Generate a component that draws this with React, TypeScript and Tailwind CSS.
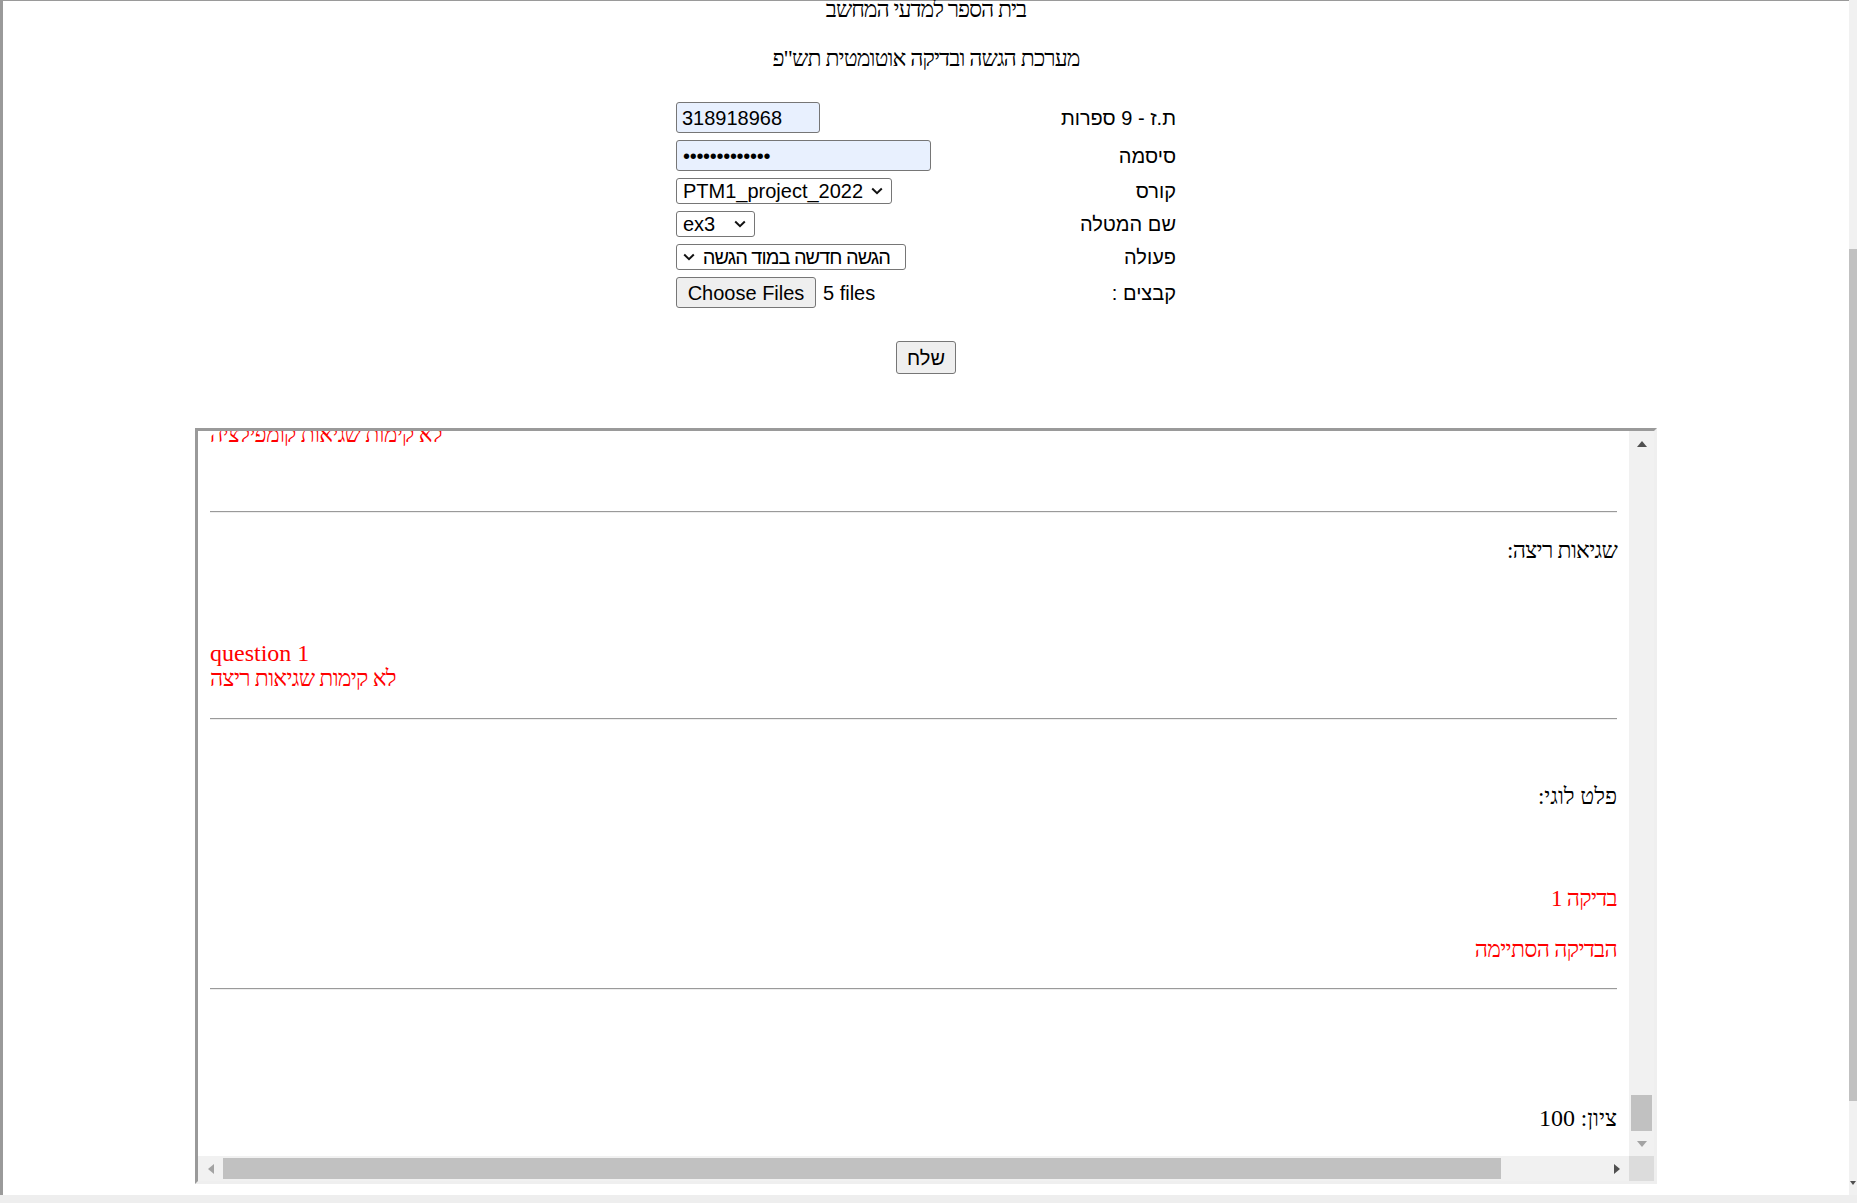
import React from "react";

const sans = "font-['Liberation_Sans','DejaVu_Sans',sans-serif]";
const serif = "font-['Liberation_Serif','DejaVu_Serif',serif]";

function Chevron() {
  return (
    <svg width="12" height="8" viewBox="0 0 12 8" className="pointer-events-none">
      <path d="M1.2 1.5l4.8 4.6 4.8-4.6" fill="none" stroke="#111" strokeWidth="2" />
    </svg>
  );
}

function FakeSelect({ value, width, rtl }: { value: string; width: string; rtl?: boolean }) {
  return (
    <div
      dir={rtl ? "rtl" : "ltr"}
      className={`relative flex h-[26px] items-center rounded-[3px] border border-[#767676] bg-white text-[20px] leading-none text-black ${width} ${rtl ? "pr-[15px] tracking-[-1px]" : "pl-[6px]"}`}
    >
      <span className="whitespace-nowrap">{value}</span>
      <span className={`absolute top-[8px] ${rtl ? "left-[6px]" : "right-[8px]"}`}>
        <Chevron />
      </span>
    </div>
  );
}

function Row({ label, children, cls }: { label: string; children: React.ReactNode; cls: string }) {
  return (
    <div className={`flex items-center justify-between ${cls}`}>
      <div className="text-[20px] leading-[20px] text-black">{label}</div>
      <div dir="ltr" className="flex items-center">
        {children}
      </div>
    </div>
  );
}

function Arrow({ dir, color }: { dir: "up" | "down" | "left" | "right"; color: string }) {
  const pts = {
    up: "0,6 5,0 10,6",
    down: "0,0 10,0 5,6",
    left: "6,0 6,10 0,5",
    right: "0,0 0,10 6,5",
  }[dir];
  const w = dir === "up" || dir === "down" ? 10 : 6;
  const h = dir === "up" || dir === "down" ? 6 : 10;
  return (
    <svg width={w} height={h} viewBox={`0 0 ${w} ${h}`}>
      <polygon points={pts} fill={color} />
    </svg>
  );
}

function ResultsFrame() {
  return (
    <div dir="ltr" className="mx-auto flex h-[756px] w-[1462px] flex-col border-[3px] border-t-[#9a9a9a] border-l-[#9a9a9a] border-r-[#efefef] border-b-[#efefef] bg-white">
      <div className="flex min-h-0 flex-1">
        <div dir="rtl" className={`min-w-0 flex-1 overflow-hidden px-[12px] text-[23px] leading-[26px] tracking-[-0.7px] text-black ${serif}`}>
          <div className="mt-[-9px] text-left text-[#ff0000]">לא קימות שגיאות קומפילציה</div>
          <hr className="mt-[63px] h-0 border-t border-b border-t-[#9a9a9a] border-b-[#eeeeee]" />
          <div className="mt-[25px]">שגיאות ריצה:</div>
          <div className="mt-[76px] text-left text-[#ff0000]">
            <div dir="ltr" className="text-[24px] tracking-normal">question 1</div>
            <div>לא קימות שגיאות ריצה</div>
          </div>
          <hr className="mt-[26px] h-0 border-t border-b border-t-[#9a9a9a] border-b-[#eeeeee]" />
          <div className="mt-[64px] tracking-normal">פלט לוגי:</div>
          <div className="mt-[76px] text-[#ff0000]">בדיקה 1</div>
          <div className="mt-[25px] text-[#ff0000]">הבדיקה הסתיימה</div>
          <hr className="mt-[25px] h-0 border-t border-b border-t-[#9a9a9a] border-b-[#eeeeee]" />
          <div className="mt-[115px] tracking-normal">
            ציון: <span className="text-[24px]">100</span>
          </div>
        </div>
        {/* vertical scrollbar */}
        <div className="flex w-[25px] flex-col items-center bg-[#f1f1f1]">
          <div className="flex h-[25px] items-center justify-center">
            <Arrow dir="up" color="#505050" />
          </div>
          <div className="flex-1" />
          <div className="h-[36px] w-[21px] bg-[#c1c1c1]" />
          <div className="flex h-[25px] items-center justify-center">
            <Arrow dir="down" color="#a3a3a3" />
          </div>
        </div>
      </div>
      {/* horizontal scrollbar */}
      <div className="flex h-[25px]">
        <div className="flex flex-1 items-center bg-[#f1f1f1]">
          <div className="flex w-[25px] items-center justify-center">
            <Arrow dir="left" color="#a3a3a3" />
          </div>
          <div className="h-[21px] w-[1278px] bg-[#c1c1c1]" />
          <div className="flex-1" />
          <div className="flex w-[25px] items-center justify-center">
            <Arrow dir="right" color="#505050" />
          </div>
        </div>
        <div className="w-[25px] bg-[#dcdcdc]" />
      </div>
    </div>
  );
}

export default function App() {
  return (
    <div className={`flex h-[1203px] w-full flex-col overflow-hidden bg-white ${sans}`}>
      <div className="flex h-[1195px]">
        <main dir="rtl" className="min-w-0 flex-1 border-t border-l-[3px] border-[#9a9a9a]">
          <div className={`mt-[-4px] text-center text-[23px] leading-[26px] tracking-[-1px] text-black ${serif}`}>
            בית הספר למדעי המחשב
          </div>
          <div className={`mt-[23px] text-center text-[23px] leading-[26px] tracking-[-0.9px] text-black ${serif}`}>
            מערכת הגשה ובדיקה אוטומטית תש"פ
          </div>

          <div className="mx-auto mt-[30px] w-[500px]">
            <Row label="ת.ז - 9 ספרות" cls="h-[31px]">
              <div className="flex h-[31px] w-[144px] items-center rounded-[3px] border border-[#767676] bg-[#e8f0fe] pl-[5px] text-[20px] text-black">
                318918968
              </div>
            </Row>
            <Row label="סיסמה" cls="mt-[7px] h-[31px]">
              <div className="flex h-[31px] w-[255px] items-center rounded-[3px] border border-[#767676] bg-[#e8f0fe] pl-[6px] text-[20px] tracking-[-0.3px] text-black">
                •••••••••••••
              </div>
            </Row>
            <Row label="קורס" cls="mt-[7px] h-[26px]">
              <FakeSelect value="PTM1_project_2022" width="w-[216px]" />
            </Row>
            <Row label="שם המטלה" cls="mt-[7px] h-[26px]">
              <FakeSelect value="ex3" width="w-[79px]" />
            </Row>
            <Row label="פעולה" cls="mt-[7px] h-[26px]">
              <FakeSelect value="הגשה חדשה במוד הגשה" width="w-[230px]" rtl />
            </Row>
            <Row label="קבצים :" cls="mt-[7px] h-[31px]">
              <button className="h-[31px] w-[140px] rounded-[3px] border border-[#767676] bg-[#efefef] text-[20px] leading-none text-black">
                Choose Files
              </button>
              <span className="ml-[7px] text-[20px] leading-none text-black">5 files</span>
            </Row>
          </div>

          <div className="mt-[33px] flex justify-center">
            <button className="h-[33px] w-[60px] rounded-[3px] border border-[#767676] bg-[#efefef] text-[20px] leading-none text-black">
              שלח
            </button>
          </div>

          <div className="mt-[54px]">
            <ResultsFrame />
          </div>
        </main>
        {/* page scrollbar */}
        <div className="flex w-[8px] flex-col bg-[#f1f1f1]">
          <div className="h-[249px]" />
          <div className="h-[852px] bg-[#c1c1c1]" />
          <div className="flex-1" />
          <div className="mb-[10px] flex justify-center">
            <svg width="6" height="4" viewBox="0 0 6 4">
              <polygon points="0,0 6,0 3,4" fill="#505050" />
            </svg>
          </div>
        </div>
      </div>
      <div className="h-[8px] bg-[#eeeeee]" />
    </div>
  );
}
